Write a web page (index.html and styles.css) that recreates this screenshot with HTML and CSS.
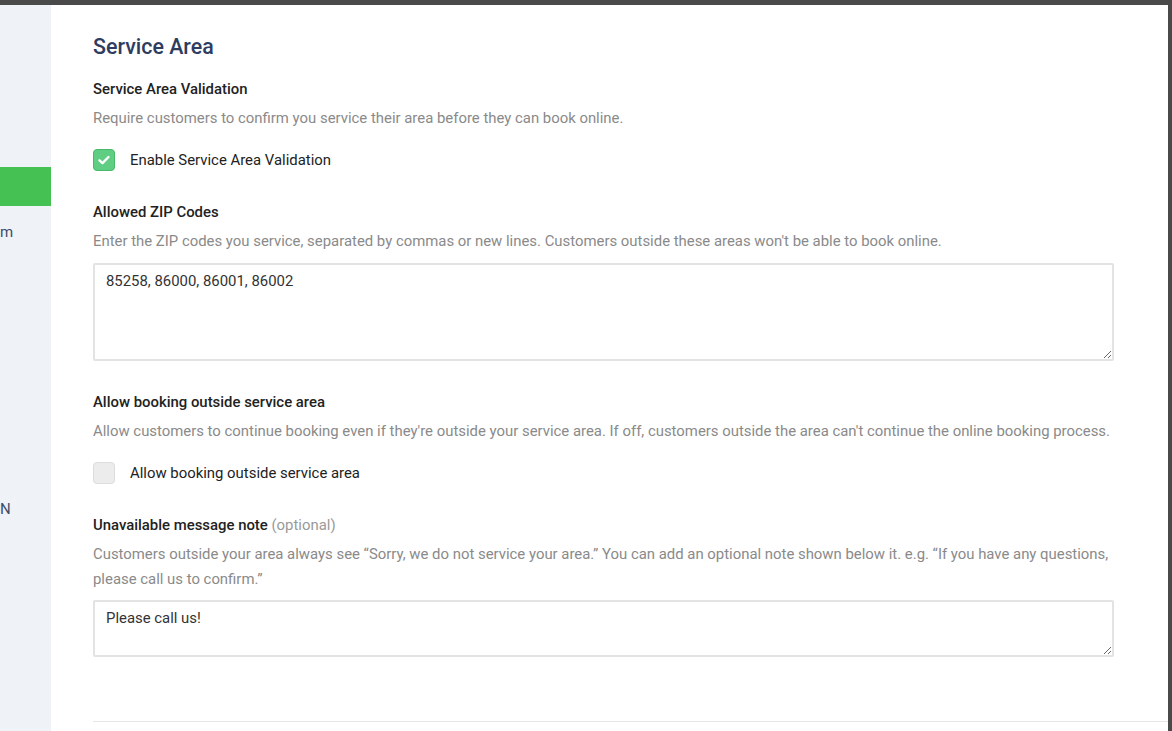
FILE: index.html
```html
<!DOCTYPE html>
<html lang="en">
<head>
  <meta charset="UTF-8" />
  <title>Service Area Settings</title>
  <link rel="stylesheet" href="styles.css">
</head>
<body>
  <div class="frame">
    <div class="sidebar">
      <div class="nav-item active"></div>
      <div class="nav-item">m</div>
      <div class="nav-item spacer"></div>
      <div class="nav-item">N</div>
    </div>

    <div class="content">
      <h1>Service Area</h1>

      <div class="field">
        <h3>Service Area Validation</h3>
        <p class="hint">Require customers to confirm you service their area before they can book online.</p>
        <label class="check">
          <span class="box checked">
            <svg width="16" height="16" viewBox="0 0 16 16"><path d="M3.5 8.3l3 2.8L12.5 5" fill="none" stroke="#fff" stroke-width="2.4" stroke-linecap="round" stroke-linejoin="round"/></svg>
          </span>
          Enable Service Area Validation
        </label>
      </div>

      <div class="field">
        <h3>Allowed ZIP Codes</h3>
        <p class="hint">Enter the ZIP codes you service, separated by commas or new lines. Customers outside these areas won't be able to book online.</p>
        <textarea class="zips">85258, 86000, 86001, 86002</textarea>
      </div>

      <div class="field">
        <h3>Allow booking outside service area</h3>
        <p class="hint">Allow customers to continue booking even if they're outside your service area. If off, customers outside the area can't continue the online booking process.</p>
        <label class="check">
          <span class="box"></span>
          Allow booking outside service area
        </label>
      </div>

      <div class="field">
        <h3>Unavailable message note <span class="optional">(optional)</span></h3>
        <p class="hint">Customers outside your area always see “Sorry, we do not service your area.” You can add an optional note shown below it. e.g. “If you have any questions, please call us to confirm.”</p>
        <textarea class="note">Please call us!</textarea>
      </div>

      <hr>
    </div>
  </div>
</body>
</html>
```

FILE: styles.css
```css
* {
  box-sizing: border-box;
}

html, body {
  margin: 0;
  height: 100%;
}

body {
  font-family: Roboto, 'Noto Sans', sans-serif;
  background: #4a4a4a;
  color: #222;
  padding: 5px 4px 0 0;
  overflow: hidden;
}

.frame {
  display: flex;
  height: 100%;
  background: #fff;
}

.sidebar {
  width: 51px;
  flex-shrink: 0;
  background: #eff2f7;
  padding-top: 162px;
  font-size: 15px;
  color: #3d4d6b;
}

.nav-item {
  height: 39px;
  line-height: 52px;
  white-space: nowrap;
}

.nav-item.active {
  background: #45c153;
}

.nav-item.spacer {
  height: 238px;
}

.content {
  flex: 1;
  padding: 28px 0 0 42px;
}

h1 {
  margin: 0 0 17px;
  font-size: 21.4px;
  line-height: 28px;
  font-weight: 500;
  color: #2e3c60;
}

h3 {
  margin: 0;
  font-size: 14.9px;
  font-weight: 500;
  line-height: 22px;
  color: #222;
}

.optional {
  font-weight: 400;
  color: #999;
}

.field {
  margin-bottom: 30px;
  width: 1040px;
}

.hint {
  margin: 6px 0 0;
  font-size: 14.9px;
  line-height: 25px;
  color: #8a8a8a;
}

.check {
  display: flex;
  align-items: center;
  gap: 15px;
  margin-top: 18px;
  font-size: 14.9px;
  line-height: 22px;
  color: #222;
}

.box {
  width: 22px;
  height: 22px;
  border-radius: 4px;
  background: #ececec;
  border: 1px solid #ddd;
  display: flex;
  align-items: center;
  justify-content: center;
}

.box.checked {
  background: #5fcd82;
  border-color: #45b86a;
}

textarea {
  display: block;
  width: 1021px;
  margin-top: 9px;
  padding: 7px 11px;
  font-family: inherit;
  font-size: 14.9px;
  line-height: 18px;
  color: #333;
  border: 2px solid #e3e3e3;
  border-radius: 2px;
  resize: vertical;
}

.zips {
  height: 98px;
}

.note {
  height: 57px;
  margin-top: 8px;
}

hr {
  margin: 64px 0 0;
  border: 0;
  border-top: 1px solid #e6e6e6;
}
```
